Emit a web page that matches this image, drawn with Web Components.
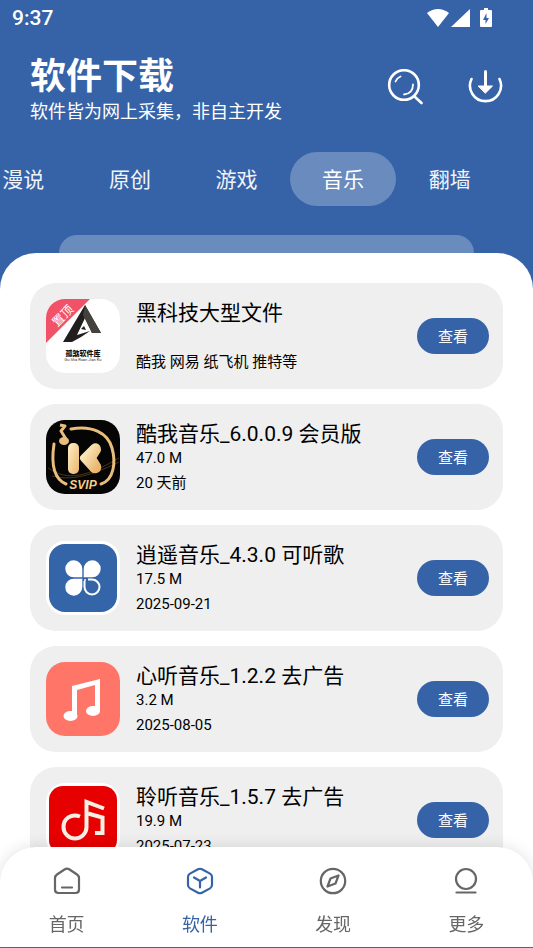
<!DOCTYPE html>
<html lang="zh-CN">
<head>
<meta charset="UTF-8">
<meta name="viewport" content="width=device-width, initial-scale=1">
<title>软件下载</title>
<style>
    :root {
        --brand: #3663a8;
        --brand-soft: #6a8bbd;
        --surface: #ffffff;
        --card: #efefef;
        --muted: #666666;
    }
    body {
        margin: 0;
        font-family: Roboto, "Noto Sans CJK SC", sans-serif;
    }
</style>
</head>
<body>
<software-page>
    <status-bar slot="top" time="9:37"></status-bar>
    <page-header slot="top" heading="软件下载">软件皆为网上采集，非自主开发</page-header>
    <category-tabs slot="top" items="漫说,原创,游戏,音乐,翻墙" active="音乐"></category-tabs>

    <app-card heading="黑科技大型文件" note="酷我 网易 纸飞机 推特等">
        <svg slot="logo" viewBox="0 0 74 74" aria-hidden="true">
            <defs><clipPath id="c1"><rect width="74" height="74" rx="19"/></clipPath></defs>
            <g clip-path="url(#c1)">
                <rect width="74" height="74" fill="#fff"/>
                <path d="M0 0H44L0 44Z" fill="#f25268"/>
                <text x="0" y="4" transform="translate(17 17) rotate(-45)" text-anchor="middle" font-size="12" fill="#fff">置顶</text>
                <path d="M39 6L55 34H46L39 19L31 36L44 32L35 38L26 43H17Z" fill="#201f1e"/>
                <path d="M39 6L55 34H46L37 16Z" fill="#45413d"/>
                <path d="M35 30L38 27L40 31Z" fill="#201f1e"/>
                <text x="37" y="57" text-anchor="middle" font-size="7" font-weight="900" fill="#111">孤煞软件库</text>
                <text x="37" y="62" text-anchor="middle" font-size="4" fill="#333">Gu Sha Ruan Jian Ku</text>
            </g>
        </svg>
    </app-card>

    <app-card heading="酷我音乐_6.0.0.9 会员版" size="47.0 M" note="20 天前">
        <svg slot="logo" viewBox="0 0 74 74" aria-hidden="true">
            <defs>
                <linearGradient id="gold" x1="0" y1="0" x2="1" y2="1">
                    <stop offset="0" stop-color="#fff0c8"/>
                    <stop offset="1" stop-color="#e8b56c"/>
                </linearGradient>
            </defs>
            <rect width="74" height="74" rx="19" fill="#050505"/>
            <path d="M2 48C22 62 42 56 73 38M6 56C30 62 52 52 73 42" fill="none" stroke="#4a3418" stroke-width="1"/>
            <path d="M8 24C5 44 8 59 20 64" fill="none" stroke="#e9bd7c" stroke-width="3" stroke-linecap="round"/>
            <path d="M25 9C46 5 62 13 66 28C70 42 68 60 55 64" fill="none" stroke="#e9bd7c" stroke-width="3" stroke-linecap="round"/>
            <path d="M14 5L19 6L15 11L20 19" fill="none" stroke="#e9bd7c" stroke-width="3" stroke-linejoin="round"/>
            <ellipse cx="18" cy="21" rx="5" ry="4" fill="#e9bd7c"/>
            <rect x="22" y="23" width="11" height="31" rx="5" fill="url(#gold)"/>
            <path d="M38 38L48 28Q51 26 51 30L46 38L51 46Q52 50 48 49Z" fill="url(#gold)" stroke="url(#gold)" stroke-width="8" stroke-linejoin="round"/>
            <text x="37" y="69" text-anchor="middle" font-family="Liberation Sans, sans-serif" font-size="12" font-weight="700" font-style="italic" fill="#f4cd8e">SVIP</text>
        </svg>
    </app-card>

    <app-card heading="逍遥音乐_4.3.0 可听歌" size="17.5 M" note="2025-09-21">
        <svg slot="logo" viewBox="0 0 74 74" aria-hidden="true">
            <rect width="74" height="74" rx="19" fill="#fff"/>
            <rect x="3" y="3" width="68" height="68" rx="16" fill="#3565a9"/>
            <g fill="#fff">
                <path d="M36.300 36.300H28A8.500 8.500 0 1 1 36.300 28Z"/>
                <path d="M37.700 36.300V28A8.500 8.500 0 1 1 46 36.300Z"/>
                <path d="M36.300 37.700V46A8.500 8.500 0 1 1 28 37.700Z"/>
            </g>
            <path d="M38.500 40V46A7.500 7.500 0 1 0 46 38.500H42" fill="none" stroke="#fff" stroke-width="2"/>
            <circle cx="39" cy="39" r="1" fill="#fff"/>
        </svg>
    </app-card>

    <app-card heading="心听音乐_1.2.2 去广告" size="3.2 M" note="2025-08-05">
        <svg slot="logo" viewBox="0 0 74 74" aria-hidden="true">
            <rect width="74" height="74" rx="19" fill="#ff7668"/>
            <path d="M26 24L54 17V49H49V23L31 28V54H26Z" fill="#fff"/>
            <ellipse cx="24.500" cy="54" rx="7" ry="5" fill="#fff"/>
            <ellipse cx="47" cy="49" rx="7" ry="5" fill="#fff"/>
        </svg>
    </app-card>

    <app-card heading="聆听音乐_1.5.7 去广告" size="19.9 M" note="2025-07-23">
        <svg slot="logo" viewBox="0 0 74 74" aria-hidden="true">
            <rect width="74" height="74" rx="19" fill="#fff"/>
            <rect x="3" y="3" width="68" height="68" rx="14" fill="#e60000"/>
            <path d="M34 33.500C25 30 17.500 36 17.500 44A11.500 11.500 0 0 0 40.500 44V19L58 25.500" fill="none" stroke="#f6efe4" stroke-width="4"/>
            <path d="M42 30.500L56.500 34.500V50H49" fill="none" stroke="#f6efe4" stroke-width="4"/>
        </svg>
    </app-card>

    <bottom-nav slot="bottom" active="软件"></bottom-nav>
</software-page>

<script>
/**
 * software-page
 * Page shell: blue header area, white rounded sheet with the list, bottom bar.
 */
class SoftwarePage extends HTMLElement {
    constructor() {
        super();
        this.attachShadow({ mode: 'open' });
    }

    connectedCallback() {
        this.shadowRoot.innerHTML = `
            <style>
                :host {
                    display: flex;
                    flex-direction: column;
                    height: 100vh;
                    overflow: hidden;
                    background: var(--brand);
                }
                .peek {
                    flex: none;
                    height: 18px;
                    margin: 29px 59px 0;
                    border-radius: 18px 18px 0 0;
                    background: var(--brand-soft);
                }
                main {
                    flex: 1;
                    min-height: 0;
                    overflow: hidden;
                    display: flex;
                    flex-direction: column;
                    gap: 15px;
                    padding: 30px 30px 0;
                    border-radius: 36px 36px 0 0;
                    background: var(--surface);
                }
            </style>
            <slot name="top"></slot>
            <div class="peek"></div>
            <main><slot></slot></main>
            <slot name="bottom"></slot>
        `;
    }
}

/**
 * status-bar
 * Clock on the left, wifi, signal and battery on the right.
 */
class StatusBar extends HTMLElement {
    constructor() {
        super();
        this.attachShadow({ mode: 'open' });
    }

    connectedCallback() {
        this.shadowRoot.innerHTML = `
            <style>
                :host {
                    display: flex;
                    flex: none;
                    justify-content: space-between;
                    align-items: center;
                    height: 36px;
                    padding: 0 41px 0 12px;
                    color: #fff;
                    font-size: 21px;
                    font-weight: 500;
                }
                .icons {
                    display: flex;
                    align-items: center;
                    gap: 2px;
                }
                .battery {
                    margin-left: 8px;
                }
                svg {
                    fill: currentColor;
                }
            </style>
            <span>${this.getAttribute('time')}</span>
            <span class="icons">
                <svg width="22" height="20" viewBox="0 0 22 20"><path d="M0 5Q11-3 22 5L11 19Z"/></svg>
                <svg width="19" height="20" viewBox="0 0 19 20"><path d="M19 1V19H0Z"/></svg>
                <svg class="battery" width="12" height="20" viewBox="0 0 12 20"><path fill-rule="evenodd" d="M4 0H8V2H11Q12 2 12 3V18Q12 19 11 19H1Q0 19 0 18V3Q0 2 1 2H4ZM6.500 5L3 12H5.500V16L9 10H6.500Z"/></svg>
            </span>
        `;
    }
}

/**
 * page-header
 * Heading with a line of text under it, plus the search and download actions.
 */
class PageHeader extends HTMLElement {
    constructor() {
        super();
        this.attachShadow({ mode: 'open' });
    }

    connectedCallback() {
        this.shadowRoot.innerHTML = `
            <style>
                :host {
                    display: flex;
                    flex: none;
                    justify-content: space-between;
                    align-items: center;
                    padding: 16px 30px 0;
                    color: #fff;
                }
                h1 {
                    margin: 0;
                    font-size: 36px;
                    line-height: 50px;
                    font-weight: 700;
                }
                p {
                    margin: 0;
                    font-size: 18px;
                    line-height: 20px;
                }
                .actions {
                    display: flex;
                    gap: 44px;
                }
                button {
                    display: block;
                    padding: 0;
                    border: none;
                    background: none;
                    color: inherit;
                    cursor: pointer;
                }
                svg {
                    display: block;
                    width: 36px;
                    height: 36px;
                    fill: none;
                    stroke: currentColor;
                    stroke-width: 2.600;
                    stroke-linecap: round;
                }
            </style>
            <div>
                <h1>${this.getAttribute('heading')}</h1>
                <p><slot></slot></p>
            </div>
            <div class="actions">
                <button type="button" aria-label="搜索">
                    <svg viewBox="0 0 36 36">
                        <circle cx="17" cy="16" r="14.800"/>
                        <path d="M27.500 27.500L34.500 34"/>
                        <path stroke-width="1.800" d="M8.500 12.500Q10 9 13.500 7.500M26 15.500Q26 24.500 17 25.500"/>
                    </svg>
                </button>
                <button type="button" aria-label="下载">
                    <svg viewBox="0 0 36 36">
                        <path d="M4.500 10A15.500 15.500 0 1 0 32.500 10"/>
                        <path stroke-width="3" d="M18.500 2.500V19"/>
                        <path d="M11.500 17H25.500L18.500 24Z" fill="currentColor" stroke-width="1" stroke-linejoin="round"/>
                    </svg>
                </button>
            </div>
        `;
    }
}

/**
 * category-tabs
 * Horizontal strip of categories, aligned to its end.
 */
class CategoryTabs extends HTMLElement {
    constructor() {
        super();
        this.attachShadow({ mode: 'open' });
    }

    connectedCallback() {
        const active = this.getAttribute('active');
        const tabs = this.getAttribute('items').split(',').map(name => `
            <button type="button" role="tab" aria-selected="${name === active}">${name}</button>
        `).join('');

        this.shadowRoot.innerHTML = `
            <style>
                :host {
                    display: block;
                    flex: none;
                    overflow: hidden;
                    padding: 30px 30px 0;
                }
                .strip {
                    display: flex;
                    justify-content: flex-end;
                }
                button {
                    flex: 0 0 20vw;
                    height: 54px;
                    padding: 0 0 2px;
                    border: none;
                    border-radius: 27px;
                    background: none;
                    color: #f0f3f8;
                    font: inherit;
                    font-size: 21px;
                    cursor: pointer;
                }
                button[aria-selected="true"] {
                    background: var(--brand-soft);
                    color: #fff;
                }
            </style>
            <div class="strip" role="tablist">${tabs}</div>
        `;

        this.shadowRoot.querySelectorAll('button').forEach(btn => {
            btn.addEventListener('click', () => this.select(btn));
        });
    }

    select(tab) {
        this.shadowRoot.querySelectorAll('button').forEach(btn => {
            btn.setAttribute('aria-selected', String(btn === tab));
        });
    }
}

/**
 * app-card
 * One row of the list: logo slot, name, size, date and the view button.
 */
class AppCard extends HTMLElement {
    constructor() {
        super();
        this.attachShadow({ mode: 'open' });
    }

    connectedCallback() {
        this.shadowRoot.innerHTML = `
            <style>
                :host {
                    display: flex;
                    flex: none;
                    align-items: center;
                    gap: 16px;
                    padding: 15px 14px 15px 16px;
                    border-radius: 26px;
                    background: var(--card);
                    color: #000;
                }
                ::slotted(svg) {
                    display: block;
                    flex: none;
                    width: 74px;
                    height: 74px;
                }
                .info {
                    flex: 1;
                    min-width: 0;
                }
                h2 {
                    margin: 0;
                    font-size: 21px;
                    line-height: 30px;
                    font-weight: 400;
                }
                p {
                    margin: 0;
                    font-size: 15px;
                }
                .size {
                    height: 18px;
                    line-height: 18px;
                }
                .note {
                    margin-top: 4px;
                    line-height: 24px;
                }
                button {
                    flex: none;
                    height: 36px;
                    padding: 0 21px 2px;
                    border: none;
                    border-radius: 18px;
                    background: var(--brand);
                    color: #fff;
                    font: inherit;
                    font-size: 15px;
                    cursor: pointer;
                }
            </style>
            <slot name="logo"></slot>
            <div class="info">
                <h2>${this.getAttribute('heading')}</h2>
                <p class="size">${this.getAttribute('size') || ''}</p>
                <p class="note">${this.getAttribute('note')}</p>
            </div>
            <button type="button">查看</button>
        `;
    }
}

/**
 * bottom-nav
 * Main navigation, laid over the end of the list.
 */
class BottomNav extends HTMLElement {
    constructor() {
        super();
        this.attachShadow({ mode: 'open' });
        this.items = [
            ['首页', '<path d="M11.500 2.500Q14 0.800 16.500 2.500L24 7.500Q26 9 26 11V22.500Q26 26 22.500 26H5.500Q2 26 2 22.500V11Q2 9 4 7.500ZM9 20.500H19"/>'],
            ['软件', '<path d="M12 2.300Q14 1.200 16 2.300L24 6.600Q26 7.800 26 10V18Q26 20.200 24 21.400L16 25.700Q14 26.800 12 25.700L4 21.400Q2 20.200 2 18V10Q2 7.800 4 6.600Z"/><path d="M8 10.500L14 14L20 10.500M14 14V20.500"/>'],
            ['发现', '<circle cx="14" cy="14" r="12.200"/><path d="M19.500 8.500L16.500 16.500L8.500 19.500L11.500 11.500Z" stroke-linejoin="round"/>'],
            ['更多', '<circle cx="14" cy="12" r="10"/><path d="M4.500 25.500H23.500"/>']
        ];
    }

    connectedCallback() {
        const active = this.getAttribute('active');
        const links = this.items.map(([label, icon]) => `
            <a href="#" ${label === active ? 'aria-current="page"' : ''}>
                <svg viewBox="0 0 28 28" aria-hidden="true">${icon}</svg>
                <span>${label}</span>
            </a>
        `).join('');

        this.shadowRoot.innerHTML = `
            <style>
                :host {
                    display: block;
                    position: fixed;
                    left: 0;
                    right: 0;
                    bottom: 0;
                    border-bottom: 1px solid var(--muted);
                }
                nav {
                    display: flex;
                    padding: 20px 0 8px;
                    border-radius: 36px 36px 0 0;
                    background: var(--surface);
                    box-shadow: 0 0 16px rgba(0, 0, 0, 0.12);
                }
                a {
                    flex: 1;
                    display: flex;
                    flex-direction: column;
                    align-items: center;
                    gap: 16px;
                    color: var(--muted);
                    font-size: 18px;
                    line-height: 28px;
                    text-decoration: none;
                }
                a[aria-current] {
                    color: var(--brand);
                }
                svg {
                    width: 28px;
                    height: 28px;
                    fill: none;
                    stroke: currentColor;
                    stroke-width: 2.200;
                    stroke-linecap: round;
                }
            </style>
            <nav>${links}</nav>
        `;
    }
}

customElements.define('software-page', SoftwarePage);
customElements.define('status-bar', StatusBar);
customElements.define('page-header', PageHeader);
customElements.define('category-tabs', CategoryTabs);
customElements.define('app-card', AppCard);
customElements.define('bottom-nav', BottomNav);
</script>
</body>
</html>
